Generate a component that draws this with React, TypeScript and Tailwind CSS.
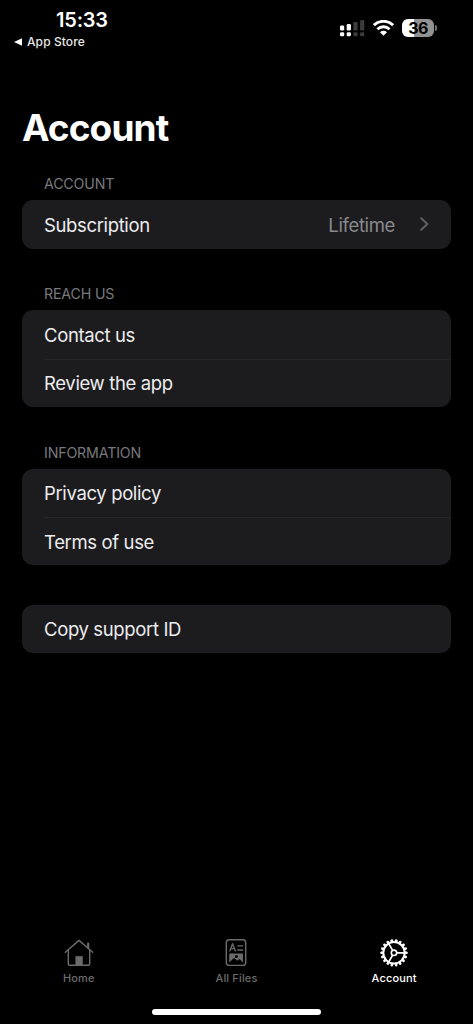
import { clsx } from "clsx";
import type { ReactNode } from "react";

interface RowProps {
  label: string;
  value?: string;
  divider?: boolean;
}

const Row = ({ label, value, divider }: RowProps) => {
  return (
    <div className="pl-[22px]">
      <div
        className={clsx(
          "flex h-[48.2px] items-center pt-[2px] pr-[22px] text-[18.5px] tracking-[-0.36px] text-[#ececee]",
          divider && "border-t border-[#262628]"
        )}
      >
        <span>{label}</span>
        {value && (
          <>
            <span className="ml-auto text-[#8a8a8e]">{value}</span>
            <svg className="mb-[2px] ml-[25px] h-[14px] w-[9px]" viewBox="0 0 9 14" fill="none">
              <path d="M1.2 1.2 7.4 7l-6.2 5.8" stroke="#626266" strokeWidth="1.9" strokeLinecap="round" strokeLinejoin="round" />
            </svg>
          </>
        )}
      </div>
    </div>
  );
};

const Section = ({ title, children }: { title?: string; children: ReactNode }) => {
  return (
    <section>
      {title && (
        <h2 className="mb-[6px] pl-[22px] text-[14.2px] leading-5 font-normal tracking-[-0.15px] text-[#79797d]">
          {title}
        </h2>
      )}
      <div className="overflow-hidden rounded-[11px] bg-[#1c1c1e]">{children}</div>
    </section>
  );
};

const bars = [
  { x: 0, y: 5.5, h: 5, on: true },
  { x: 6.7, y: 4, h: 6.5, on: true },
  { x: 13.4, y: 2, h: 8.5, on: false },
  { x: 20.1, y: 0, h: 10.5, on: false },
];

const StatusBar = () => {
  return (
    <header className="flex h-[54px] justify-between pt-[9px] pr-9 pl-[14px]">
      <div>
        <div className="pl-[42px] text-[20px] leading-[23px] font-semibold tracking-[-0.2px] text-white">15:33</div>
        <div className="flex items-center text-[12px] leading-[19px] font-medium tracking-[0.1px] text-[#e8e8e8]">
          <svg className="mr-[5px] h-2 w-2" viewBox="0 0 8 8" fill="#fff">
            <path d="M0 4 8 .2v7.6z" />
          </svg>
          App Store
        </div>
      </div>
      <div className="mt-[9px] flex h-[18px] items-center pt-[2px]">
        <svg className="h-[17px] w-[25px]" viewBox="0 0 25 17">
          {bars.map((b) => (
            <g key={b.x} fill={b.on ? "#fff" : "#3b3b3b"}>
              <rect x={b.x} y={b.y} width="4.2" height={b.h} rx="1.2" />
              <rect x={b.x} y="12.3" width="4.2" height="4" rx="1.2" />
            </g>
          ))}
        </svg>
        <svg className="ml-2 h-4 w-[21px]" viewBox="0 0 21 16" fill="none" stroke="#fff" strokeWidth="2.9">
          <path d="M.9 5.2a13.8 13.8 0 0 1 19.2 0" />
          <path d="M4.4 9.2a8.8 8.8 0 0 1 12.2 0" />
          <path d="M10.5 15.8 7 12.3a5 5 0 0 1 7 0z" fill="#fff" stroke="none" />
        </svg>
        <div className="ml-2 flex h-[18px] w-8 items-center justify-center rounded-[6px] bg-linear-to-r from-white from-36% to-[#929292] to-36% text-[16px] font-bold tracking-[-0.6px] text-black">
          36
        </div>
        <div className="ml-px h-[6px] w-[2px] rounded-r-full bg-[#777]" />
      </div>
    </header>
  );
};

const HomeIcon = () => (
  <svg className="size-[30px]" viewBox="0 0 30 30" fill="none" stroke="currentColor" strokeWidth="1.4" strokeLinecap="round" strokeLinejoin="round">
    <path d="M1.3 14.3 15 2.4l13.7 11.9" />
    <path d="M4.3 12v13.4c0 1.2.7 1.9 1.9 1.9h17.6c1.2 0 1.9-.7 1.9-1.9V12" />
    <path d="M24.2 10V5.7" strokeWidth="2.2" />
    <path d="M11.7 27v-8.7h6.8V27z" fill="currentColor" strokeWidth=".5" />
  </svg>
);

const FilesIcon = () => (
  <svg className="size-[30px]" viewBox="0 0 30 30" fill="none" stroke="currentColor" strokeWidth="1.4" strokeLinecap="round" strokeLinejoin="round">
    <rect x="5.3" y="1.8" width="19.4" height="25.6" rx="3" />
    <path d="m8.8 12.9 2.8-7.2 2.8 7.2M9.8 10.6h3.6M16.8 7.8h4.9M16.8 12h4.9" strokeWidth="1.3" />
    <path
      d="M9.2 15.6h11.8a1 1 0 0 1 1 1v8l-3.5-3.7-2.2 1.9-3.3-2.9-4.8 4.7v-8a1 1 0 0 1 1-1z M15.4 17a1.5 1.5 0 1 0 0 3 1.5 1.5 0 0 0 0-3z"
      fill="currentColor"
      fillRule="evenodd"
      stroke="none"
    />
  </svg>
);

const teeth = Array.from({ length: 18 }, (_, i) => i * 20);

const GearIcon = () => (
  <svg className="size-[30px]" viewBox="-15 -14.8 30 30" fill="none" stroke="currentColor">
    <circle r="10.7" strokeWidth="2" />
    {teeth.map((a) => (
      <path key={a} d="M11-1.3h2l.7.7v1.2l-.7.7H11z" transform={`rotate(${a})`} fill="currentColor" stroke="none" />
    ))}
    <circle r="2.7" strokeWidth="1.6" />
    <path d="M3 0h7.5M-1.5-2.6l-3.8-6.6M-1.5 2.6l-3.8 6.6" strokeWidth="1.7" />
  </svg>
);

const tabs = [
  { label: "Home", icon: <HomeIcon />, active: false },
  { label: "All Files", icon: <FilesIcon />, active: false },
  { label: "Account", icon: <GearIcon />, active: true },
];

const App = () => {
  return (
    <div className="flex h-screen w-full flex-col overflow-hidden bg-black font-['Inter','Liberation_Sans',sans-serif]">
      <StatusBar />
      <main className="flex-1 px-[22px] pt-[50px]">
        <h1 className="text-[37px] leading-[48px] font-bold tracking-[-0.9px] text-white">Account</h1>
        <div className="mt-[22.4px] flex flex-col">
          <Section title="ACCOUNT">
            <Row label="Subscription" value="Lifetime" />
          </Section>
          <div className="mt-[35.8px]">
            <Section title="REACH US">
              <Row label="Contact us" />
              <Row label="Review the app" divider />
            </Section>
          </div>
          <div className="mt-9">
            <Section title="INFORMATION">
              <Row label="Privacy policy" />
              <Row label="Terms of use" divider />
            </Section>
          </div>
          <div className="mt-[39.8px]">
            <Section>
              <Row label="Copy support ID" />
            </Section>
          </div>
        </div>
      </main>
      <nav className="grid grid-cols-3">
        {tabs.map((tab) => (
          <div
            key={tab.label}
            className={clsx("flex flex-col items-center", tab.active ? "text-white" : "text-[#6b6b6b]")}
          >
            {tab.icon}
            <span className="mt-[2px] text-[11px] leading-4 font-medium tracking-[0.15px]">{tab.label}</span>
          </div>
        ))}
      </nav>
      <div className="mx-auto mt-[23px] mb-[9px] h-[6px] w-[169px] rounded-full bg-white" />
    </div>
  );
};

export default App;
